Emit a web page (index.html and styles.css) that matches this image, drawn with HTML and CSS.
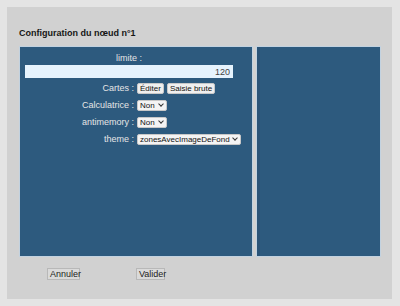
FILE: index.html
```html
<!DOCTYPE html>
<html lang="fr">
<head>
  <meta charset="UTF-8">
  <title>Configuration du nœud</title>
  <link rel="stylesheet" href="styles.css">
</head>
<body>
  <div class="dialog">
    <h3 class="dialog-title">Configuration du nœud n°1</h3>
    <div class="panels">
      <div class="panel panel-form">
        <div class="form-box">
          <div class="field-title">limite :</div>
          <input class="field-input" type="text" value="120">
          <div class="rows">
            <label class="row-label">Cartes :</label>
            <div class="row-ctrl">
              <button class="small-btn">Éditer</button>
              <button class="small-btn">Saisie brute</button>
            </div>
            <label class="row-label">Calculatrice :</label>
            <div class="row-ctrl">
              <span class="select">Non <span class="chev"></span></span>
            </div>
            <label class="row-label">antimemory :</label>
            <div class="row-ctrl">
              <span class="select">Non <span class="chev"></span></span>
            </div>
            <label class="row-label">theme :</label>
            <div class="row-ctrl">
              <span class="select select-wide">zonesAvecImageDeFond <span class="chev"></span></span>
            </div>
          </div>
        </div>
      </div>
      <div class="panel panel-side"></div>
    </div>
    <div class="actions">
      <button class="act-btn btn-cancel">Annuler</button>
      <button class="act-btn btn-ok">Valider</button>
    </div>
  </div>
</body>
</html>
```

FILE: styles.css
```css
body {
  margin: 0;
  background-color: #e4e4e4;
  font-family: "Liberation Sans", Arial, sans-serif;
  font-size: 9px;
}

.dialog {
  margin: 7px;
  width: 385px;
  height: 292px;
  background-color: #d1d1d1;
  box-sizing: border-box;
  padding: 21px 11px 0 12px;
}

.dialog-title {
  margin: 0;
  font-size: 9px;
  font-weight: bold;
  color: #151515;
  height: 10px;
  line-height: 10px;
}

.panels {
  display: flex;
  gap: 3px;
  margin-top: 8px;
  height: 211px;
}

.panel {
  background-color: #2d5a7e;
  border: 1px solid #c2d2e0;
  box-sizing: border-box;
  height: 100%;
}

.panel-form {
  width: 234px;
}

.panel-side {
  width: 125px;
  box-shadow: inset 3px 0 0 #2a5478;
}

.form-box {
  width: 208px;
  margin-left: 5px;
  padding-top: 6px;
}

.field-title {
  text-align: center;
  color: #e6e6e6;
  height: 11px;
  line-height: 11px;
}

.field-input {
  display: block;
  width: 208px;
  height: 13px;
  box-sizing: border-box;
  margin: 1px 0 0 0;
  border: none;
  padding: 0 3px;
  background-color: #e6f3fd;
  text-align: right;
  font-family: "Liberation Sans", Arial, sans-serif;
  font-size: 9px;
  color: #444;
}

.rows {
  display: grid;
  grid-template-columns: 109px auto;
  column-gap: 3px;
  row-gap: 5px;
  margin-top: 4px;
  align-items: center;
}

.row-label {
  text-align: right;
  color: #e6e6e6;
  line-height: 12px;
}

.row-ctrl {
  display: flex;
  gap: 3px;
  height: 12px;
  align-items: center;
}

.small-btn {
  font-family: "Liberation Sans", Arial, sans-serif;
  font-size: 8px;
  height: 11px;
  line-height: 9px;
  padding: 0 2px;
  border: 1px solid #c8c8c8;
  border-radius: 2px;
  background-color: #efefef;
  color: #111;
}

.select {
  display: inline-flex;
  align-items: center;
  gap: 3px;
  height: 11px;
  box-sizing: border-box;
  padding: 0 3px 0 2px;
  border: 1px solid #c8c8c8;
  border-radius: 2px;
  background-color: #f4f4f4;
  font-size: 8px;
  color: #111;
  width: 30px;
}

.select-wide {
  width: 104px;
  justify-content: space-between;
}

.chev {
  width: 3px;
  height: 3px;
  border-right: 1px solid #333;
  border-bottom: 1px solid #333;
  transform: rotate(45deg);
  margin-top: -2px;
  margin-left: auto;
}

.actions {
  position: relative;
  height: 14px;
  margin-top: 11px;
}

.act-btn {
  position: absolute;
  top: 0;
  height: 12px;
  padding: 0 2px;
  font-family: "Liberation Sans", Arial, sans-serif;
  font-size: 9px;
  line-height: 10px;
  background-color: #dadada;
  border: 1px solid #b8b8b8;
  color: #222;
}

.btn-cancel {
  left: 28px;
  width: 33px;
}

.btn-ok {
  left: 117px;
  width: 29px;
}
```
